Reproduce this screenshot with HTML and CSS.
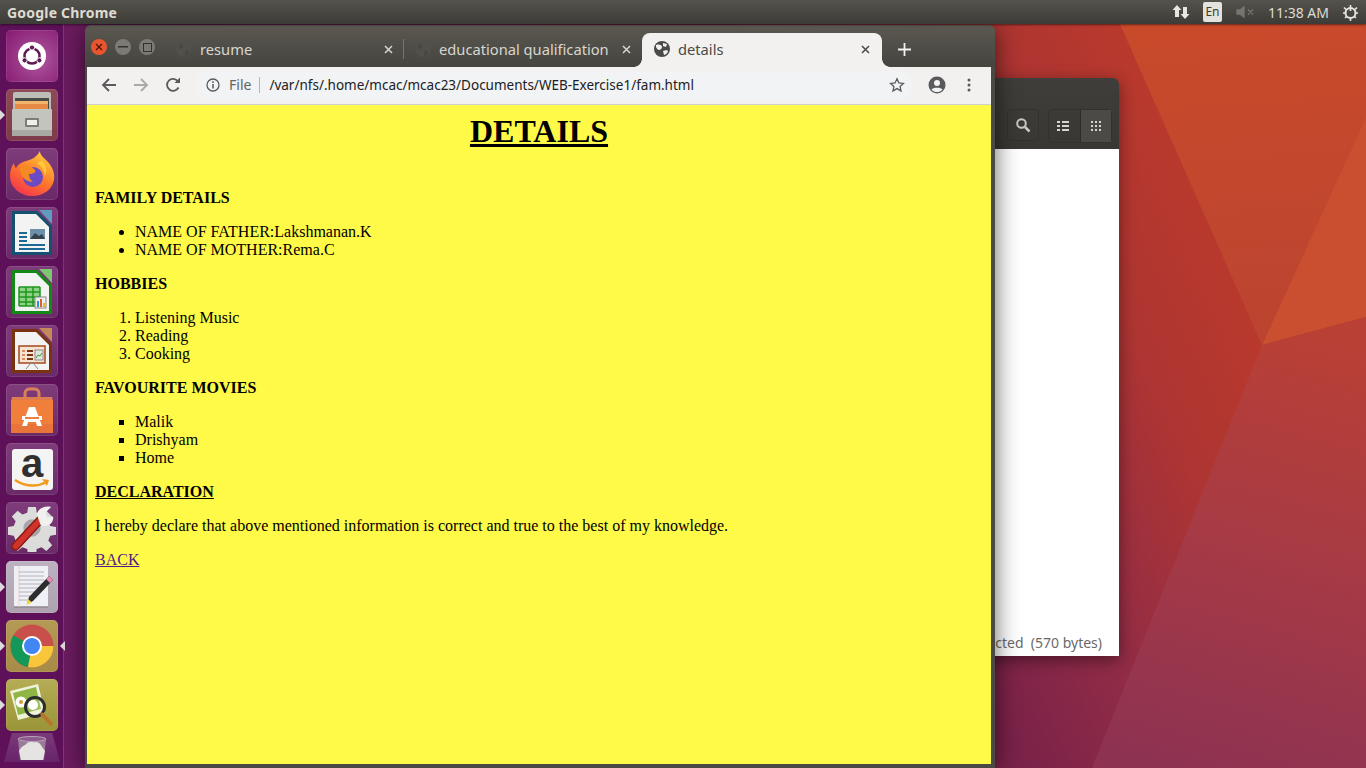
FILE: index.html
```html
<!DOCTYPE html>
<html lang="en">
<head>
    <meta charset="UTF-8">
    <title>details</title>
    <link rel="stylesheet" href="styles.css">
</head>
<body>
    <div class="desktop">
        <svg class="wallpaper" width="1366" height="768" viewBox="0 0 1366 768">
            <defs>
                <linearGradient id="wall" gradientUnits="userSpaceOnUse" x1="1200" y1="100" x2="100" y2="600">
                    <stop offset="0" stop-color="#bd3a2b"/>
                    <stop offset="0.13" stop-color="#ae3532"/>
                    <stop offset="0.25" stop-color="#922c46"/>
                    <stop offset="0.36" stop-color="#7a2249"/>
                    <stop offset="0.85" stop-color="#6c1b60"/>
                </linearGradient>
                <linearGradient id="wedge" gradientUnits="userSpaceOnUse" x1="1240" y1="24" x2="1262" y2="345">
                    <stop offset="0" stop-color="#c94a2b"/>
                    <stop offset="1" stop-color="#bb4430"/>
                </linearGradient>
                <linearGradient id="lower" gradientUnits="userSpaceOnUse" x1="1300" y1="330" x2="1180" y2="768">
                    <stop offset="0" stop-color="#b94035"/>
                    <stop offset="0.5" stop-color="#a63a45"/>
                    <stop offset="1" stop-color="#8e3252"/>
                </linearGradient>
            </defs>
            <rect width="1366" height="768" fill="url(#wall)"/>
            <polygon points="1120,24 1366,24 1366,117 1262,345" fill="url(#wedge)"/>
            <polygon points="1262,345 1366,117 1366,317" fill="#ca4f30"/>
            <polygon points="1262,345 1366,317 1366,768 1092,768" fill="url(#lower)"/>
        </svg>

        <div class="topbar">
            <span class="topbar-title">Google Chrome</span>
            <div class="indicators">
                <svg width="18" height="16" viewBox="0 0 18 16"><path d="M5 1l4.500 5H7v7H3V6H.5zM13 15l-4.500-5H11V3h4v7h2.500z" fill="#e8e6e0"/></svg>
                <span class="lang">En</span>
                <svg width="20" height="12" viewBox="0 0 20 12"><path d="M1 4h3l4-3v10L4 8H1zM12 3.500l5 5M17 3.500l-5 5" fill="#77756f" stroke="#77756f" stroke-width="1.300"/></svg>
                <span class="clock">11:38 AM</span>
                <svg width="17" height="17" viewBox="0 0 17 17"><circle cx="8.500" cy="9" r="5" fill="none" stroke="#e8e6e0" stroke-width="2"/><path d="M8.500 1v6M2 3.500l2 2M15 3.500l-2 2M1 9h2M14 9h2M3 14l1.500-1.500M14 14l-1.500-1.500M8.500 15v2" stroke="#e8e6e0" stroke-width="1.600"/></svg>
            </div>
        </div>

        <div class="launcher">
            <div class="tile tile-ubuntu">
                <svg width="30" height="30" viewBox="0 0 30 30"><circle cx="15" cy="15" r="14" fill="#fff"/><circle cx="15" cy="15" r="7.500" fill="none" stroke="#5e1a52" stroke-width="2.600"/><circle cx="15" cy="6.500" r="2.600" fill="#5e1a52" stroke="#fff"/><circle cx="7.600" cy="19.300" r="2.600" fill="#5e1a52" stroke="#fff"/><circle cx="22.400" cy="19.300" r="2.600" fill="#5e1a52" stroke="#fff"/></svg>
            </div>
            <div class="tile tile-files running">
                <svg width="44" height="46" viewBox="0 0 44 46"><rect x="3" y="0" width="38" height="20" rx="2" fill="#bdbdb8"/><rect x="5" y="6" width="34" height="14" fill="#4a4a46"/><rect x="5" y="9" width="33" height="3" fill="#f2b36b"/><rect x="5" y="12" width="33" height="5" fill="#e88a45"/><rect x="2" y="17" width="40" height="27" rx="1" fill="#c4c4bf"/><rect x="2" y="38" width="40" height="6" fill="#a9a9a4"/><rect x="15" y="26" width="14" height="9" rx="1" fill="#7d7d76"/><rect x="17" y="28" width="10" height="5" fill="#efefec"/></svg>
            </div>
            <div class="tile tile-plain">
                <svg width="46" height="46" viewBox="0 0 46 46"><defs><linearGradient id="ff" x1="0.8" y1="0" x2="0.2" y2="1"><stop offset="0" stop-color="#ffd23f"/><stop offset="0.5" stop-color="#ff7a2a"/><stop offset="1" stop-color="#f3304f"/></linearGradient></defs><path d="M31 0c0 4 3 6 7 10 6 6 8 13 7 19-2 10-11 16-22 16S1 37 1 25c0-5 1-9 4-13 0 2 1 4 2 5 2-4 6-6 10-7 5-1 11-4 14-10z" fill="url(#ff)"/><circle cx="24" cy="26" r="10" fill="#6a4bc4"/><path d="M11 16c4-2 10-2 14 2 4 3-1 5-5 5 0 3 1 6 4 8-7 0-13-5-13-15z" fill="#f58a22"/><path d="M33 10c4 4 6 10 3 15-1-6-3-10-8-13z" fill="#ffc93a"/></svg>
            </div>
            <div class="tile tile-plain">
                <svg width="42" height="48" viewBox="0 0 42 48"><path d="M1 2h25l15 15v29H1z" fill="#14506f"/><path d="M28 1h13v14z" fill="#5f9cc0"/><path d="M4 5h21l13 13v25H4z" fill="#f2f3f2"/><path d="M8 23h8v2H8zM8 27h8v2H8zM8 31h8v2H8zM8 35h26v2H8zM8 39h26v2H8z" fill="#1b6a94"/><rect x="19" y="20" width="15" height="10" fill="#6d8fa8"/><path d="M19 30l5-6 4 3 3-2 3 5z" fill="#33424e"/></svg>
            </div>
            <div class="tile tile-plain">
                <svg width="42" height="48" viewBox="0 0 42 48"><path d="M1 2h25l15 15v29H1z" fill="#138a16"/><path d="M28 1h13v14z" fill="#7dc672"/><path d="M4 5h21l13 13v25H4z" fill="#f2f3f2"/><path d="M8 19h21v19H8z" fill="#8fd184"/><path d="M8 19h21M8 24h21M8 29h21M8 34h21M8 38h21M8 19v19M15 19v19M22 19v19M29 19v19" stroke="#1c961c" stroke-width="1.500" fill="none"/><rect x="24" y="29" width="11" height="11" fill="#eee" stroke="#8a8a8a"/><path d="M26 33h2v6h-2z" fill="#2b8fd6"/><path d="M29 31h2v8h-2z" fill="#d9622a"/><path d="M32 35h2v4h-2z" fill="#f0b429"/></svg>
            </div>
            <div class="tile tile-plain">
                <svg width="42" height="48" viewBox="0 0 42 48"><path d="M1 2h25l15 15v29H1z" fill="#7a3310"/><path d="M28 1h13v14z" fill="#c58a5c"/><path d="M4 5h21l13 13v25H4z" fill="#f2f3f2"/><rect x="8" y="19" width="26" height="17" fill="#f5e3d3" stroke="#a4491c" stroke-width="1.500"/><path d="M11 23h3v2h-3zM11 27h3v2h-3zM11 31h3v2h-3z" fill="#e08a5a"/><path d="M16 23h6v2h-6zM16 27h6v2h-6zM16 31h6v2h-6z" fill="#7a3310"/><rect x="24" y="23" width="8" height="10" fill="#dfe5df" stroke="#8a8a8a"/><path d="M25 31l2-3 2 1 2-3" fill="none" stroke="#3b9b3b"/><path d="M15 42l5-6h2l5 6" fill="none" stroke="#888"/></svg>
            </div>
            <div class="tile tile-plain">
                <svg width="44" height="46" viewBox="0 0 44 46"><path d="M15 14V6c0-2 2-4 4-4h6c2 0 4 2 4 4v8" fill="none" stroke="#d9825a" stroke-width="3"/><path d="M2 10h40l1 5H1z" fill="#dd7d4f"/><path d="M1 13h42v33H1z" fill="#f07f3c"/><rect x="1" y="37" width="42" height="9" fill="#e9743a"/><path d="M19 20h6l7 19h-5l-1-4h-8l-1 4h-5z" fill="#fff"/><rect x="12" y="29" width="20" height="4" fill="#fff"/><rect x="15" y="30" width="14" height="2" fill="#ee7f3f"/></svg>
            </div>
            <div class="tile tile-plain">
                <div class="amazon">
                    <span class="amazon-a">a</span>
                    <svg width="38" height="12" viewBox="0 0 38 12"><path d="M2 2c10 7 22 7 32 2" fill="none" stroke="#f39a1c" stroke-width="2.500"/><path d="M29 1l7 1-2 6z" fill="#f39a1c"/></svg>
                </div>
            </div>
            <div class="tile tile-plain">
                <svg width="48" height="48" viewBox="0 0 50 50"><path d="M21 3h8l1 6 5 2 5-4 6 6-4 5 2 5 6 1v8l-6 1-2 5 4 5-6 6-5-4-5 2-1 6h-8l-1-6-5-2-5 4-6-6 4-5-2-5-6-1v-8l6-1 2-5-4-5 6-6 5 4 5-2z" fill="#dcdcda"/><circle cx="25" cy="25" r="9" fill="#a9a4aa"/><path d="M8 44L34 16" stroke="#8a1a14" stroke-width="9" stroke-linecap="round"/><path d="M8 44L34 16" stroke="#d0332a" stroke-width="6" stroke-linecap="round"/><path d="M30 11c1-6 8-10 15-8l-6 6 2 5 6-1c1 7-6 12-13 9z" fill="#f1f1f0"/></svg>
            </div>
            <div class="tile tile-light running">
                <svg width="42" height="42" viewBox="0 0 42 42"><rect x="3" y="0" width="34" height="41" fill="#eff0f5"/><path d="M3 41h34" stroke="#8e8791" stroke-width="1.500"/><path d="M8 0v41" stroke="#f0ccd0" stroke-width="1"/><path d="M8 6H33M8 10H33M8 14H33M8 18H33M8 22H29M8 26H26M8 30H22M8 34H19" stroke="#8e8f96" stroke-width="1" stroke-opacity="0.6"/><path d="M38 10l4 4-20 21-6 3 2-7z" fill="#2c2c2c"/><path d="M38 10l4 4-3 3-4-4z" fill="#e58ab0"/><path d="M15.500 39l1.500-6 4 3.500z" fill="#f2d44a"/></svg>
            </div>
            <div class="tile tile-chrome running focused">
                <svg width="44" height="44" viewBox="0 0 44 44"><circle cx="22" cy="22" r="21.500" fill="#c9504a"/><path d="M22 22L3.400 11.300A21.500 21.500 0 0 0 18 43.100z" fill="#12995a"/><path d="M22 22l21.500 0A21.500 21.500 0 0 1 18 43.100z" fill="#f8c63a"/><circle cx="22" cy="22" r="10" fill="#fff"/><circle cx="22" cy="22" r="8" fill="#4285f4"/></svg>
            </div>
            <div class="tile tile-viewer running">
                <svg width="46" height="44" viewBox="0 0 46 44"><path d="M1 8l28-7 7 29-27 7z" fill="#eef2d8"/><path d="M4 10l23-6 5 22-23 6z" fill="#8fb544"/><circle cx="12" cy="19" r="5.500" fill="#fff"/><circle cx="12" cy="19" r="2" fill="#d99c2b"/><circle cx="24" cy="22" r="5" fill="#fff"/><circle cx="26" cy="24" r="9.500" fill="#ffffff" fill-opacity="0.15" stroke="#2c2c2c" stroke-width="3"/><path d="M33 31l9 10" stroke="#b8742c" stroke-width="3.500" stroke-linecap="round"/></svg>
            </div>
            <div class="trash">
                <svg width="32" height="26" viewBox="0 0 32 26"><path d="M2 3l2 21h24l2-21z" fill="#9a7a9a"/><ellipse cx="16" cy="3" rx="14" ry="2.500" fill="#8c5a8c" stroke="#b8a3b6"/><path d="M3 15c3-6 6-5 8-8 4-2 6 0 9-1 4 0 6 5 9 9l-2 9H5z" fill="#e6e3e3"/></svg>
            </div>
        </div>

        <div class="files-window">
            <div class="files-header">
                <div class="files-btn"><svg width="16" height="16" viewBox="0 0 16 16"><circle cx="6.500" cy="6.500" r="4.300" fill="none" stroke="#c9c8c4" stroke-width="2"/><path d="M10 10l4.500 4.500" stroke="#c9c8c4" stroke-width="2.500"/></svg></div>
                <div class="files-toggle">
                    <div class="files-seg"><svg width="12" height="10" viewBox="0 0 12 10"><path d="M0 0h3v2H0zM5 0h7v2H5zM0 4h3v2H0zM5 4h7v2H5zM0 8h3v2H0zM5 8h7v2H5z" fill="#d6d5d1"/></svg></div>
                    <div class="files-seg on"><svg width="10" height="10" viewBox="0 0 10 10"><path d="M0 0h2v2H0zM4 0h2v2H4zM8 0h2v2H8zM0 4h2v2H0zM4 4h2v2H4zM8 4h2v2H8zM0 8h2v2H0zM4 8h2v2H4zM8 8h2v2H8z" fill="#d6d5d1"/></svg></div>
                </div>
            </div>
            <div class="files-body">
                <span class="files-status">cted&nbsp; (570 bytes)</span>
            </div>
        </div>

        <div class="chrome">
            <div class="tabstrip">
                <div class="win-btns">
                    <span class="win-btn close"><svg width="8" height="8" viewBox="0 0 8 8"><path d="M1 1l6 6M7 1L1 7" stroke="#4a1208" stroke-width="1.200"/></svg></span>
                    <span class="win-btn"><svg width="10" height="2" viewBox="0 0 10 2"><rect width="10" height="1.500" fill="#33322e"/></svg></span>
                    <span class="win-btn"><svg width="9" height="9" viewBox="0 0 9 9"><rect x="0.500" y="0.500" width="8" height="8" fill="none" stroke="#33322e"/></svg></span>
                </div>
                <div class="tab tab-first">
                    <svg class="globe" width="16" height="16" viewBox="0 0 16 16"><circle cx="8" cy="8" r="8" fill="#51504b"/><path d="M3 3c3 0 4 1 4 3S4 8 3 7zM9 10c3-1 5 0 4 2s-3 3-4 3z" fill="#484742"/></svg>
                    <span class="tab-label">resume</span>
                    <svg class="tab-x" width="9" height="9" viewBox="0 0 9 9"><path d="M1 1l7 7M8 1L1 8" stroke="#d8d6d0" stroke-width="1.500"/></svg>
                </div>
                <div class="tab tab-second">
                    <svg class="globe" width="16" height="16" viewBox="0 0 16 16"><circle cx="8" cy="8" r="8" fill="#51504b"/><path d="M3 3c3 0 4 1 4 3S4 8 3 7zM9 10c3-1 5 0 4 2s-3 3-4 3z" fill="#484742"/></svg>
                    <span class="tab-label">educational qualification</span>
                    <svg class="tab-x" width="9" height="9" viewBox="0 0 9 9"><path d="M1 1l7 7M8 1L1 8" stroke="#d8d6d0" stroke-width="1.500"/></svg>
                </div>
                <div class="tab tab-active">
                    <svg class="globe" width="16" height="16" viewBox="0 0 16 16"><circle cx="8" cy="8" r="8" fill="#4a4a48"/><path d="M2 4c3-1 6 0 6 2S6 9 5 9 3 8 2 6zM9 2l4 1-1 3-3-1zM9 10c2-1 5-1 5 0s-2 4-4 4z" fill="#f2f1ef"/></svg>
                    <span class="tab-label">details</span>
                    <svg class="tab-x" width="9" height="9" viewBox="0 0 9 9"><path d="M1 1l7 7M8 1L1 8" stroke="#4a4a48" stroke-width="1.500"/></svg>
                </div>
                <span class="new-tab"><svg width="13" height="13" viewBox="0 0 13 13"><path d="M6.500 0v13M0 6.500h13" stroke="#f2f1ef" stroke-width="1.800"/></svg></span>
            </div>
            <div class="toolbar">
                <svg class="nav" width="16" height="16" viewBox="0 0 16 16"><path d="M15 8H2M8 2L2 8l6 6" fill="none" stroke="#5a5a5c" stroke-width="1.800"/></svg>
                <svg class="nav" width="16" height="16" viewBox="0 0 16 16"><path d="M1 8h13M8 2l6 6-6 6" fill="none" stroke="#a9a9ab" stroke-width="1.800"/></svg>
                <svg class="nav" width="16" height="16" viewBox="0 0 16 16"><path d="M13.500 10.500A6 6 0 1 1 13 4.500" fill="none" stroke="#5a5a5c" stroke-width="1.800"/><path d="M9.500 6H15V0.500z" fill="#5a5a5c"/></svg>
                <div class="omnibox">
                    <svg width="14" height="14" viewBox="0 0 14 14"><circle cx="7" cy="7" r="6" fill="none" stroke="#5a5a5c" stroke-width="1.300"/><path d="M7 6v4.500M7 3.300v1.600" stroke="#5a5a5c" stroke-width="1.500"/></svg>
                    <span class="scheme">File</span>
                    <span class="url">/var/nfs/.home/mcac/mcac23/Documents/WEB-Exercise1/fam.html</span>
                    <svg class="star" width="16" height="16" viewBox="0 0 16 16"><path d="M8 1.800l1.900 4.100 4.500.5-3.300 3 .9 4.500L8 11.600l-4 2.300.9-4.500-3.300-3 4.500-.5z" fill="none" stroke="#5a5a5c" stroke-width="1.300"/></svg>
                </div>
                <svg class="avatar" width="18" height="18" viewBox="0 0 18 18"><circle cx="9" cy="9" r="8.500" fill="#5a5a5c"/><circle cx="9" cy="7" r="3" fill="#f1f3f4"/><path d="M3.500 13.500c1.500-2.500 9.500-2.500 11 0-1.500 2-3.500 2.500-5.500 2.500s-4-.5-5.500-2.500z" fill="#f1f3f4"/></svg>
                <svg class="dots" width="4" height="14" viewBox="0 0 4 14"><circle cx="2" cy="2" r="1.500" fill="#5a5a5c"/><circle cx="2" cy="7" r="1.500" fill="#5a5a5c"/><circle cx="2" cy="12" r="1.500" fill="#5a5a5c"/></svg>
            </div>
            <div class="page">
                <h1>DETAILS</h1>
                <p class="sect"><b>FAMILY DETAILS</b></p>
                <ul>
                    <li>NAME OF FATHER:Lakshmanan.K</li>
                    <li>NAME OF MOTHER:Rema.C</li>
                </ul>
                <p><b>HOBBIES</b></p>
                <ol>
                    <li>Listening Music</li>
                    <li>Reading</li>
                    <li>Cooking</li>
                </ol>
                <p><b>FAVOURITE MOVIES</b></p>
                <ul class="square">
                    <li>Malik</li>
                    <li>Drishyam</li>
                    <li>Home</li>
                </ul>
                <p><b><u>DECLARATION</u></b></p>
                <p>I hereby declare that above mentioned information is correct and true to the best of my knowledge.</p>
                <p><a href="#">BACK</a></p>
            </div>
        </div>
    </div>
</body>
</html>
```

FILE: styles.css
```css
html, body { margin: 0; padding: 0; }
body { width: 1366px; height: 768px; overflow: hidden; font-family: "Liberation Sans", sans-serif; }
.desktop { position: relative; width: 1366px; height: 768px; overflow: hidden; background: #6e1c62; }
.wallpaper { position: absolute; left: 0; top: 0; }

/* top panel */
.topbar { position: absolute; left: 0; top: 0; width: 1366px; height: 24px; display: flex; align-items: center; justify-content: space-between; background: linear-gradient(#55534c, #3c3b37); box-shadow: 0 1px 2px rgba(0,0,0,0.5); z-index: 5; }
.topbar-title { margin-left: 7px; font: bold 14px "Noto Sans", sans-serif; color: #dfdbd2; letter-spacing: 0.2px; }
.indicators { display: flex; align-items: center; margin-right: 7px; }
.lang { width: 19px; height: 20px; margin: 0 14px 0 13px; background: #e4e2dc; border-radius: 2px; color: #3c3b37; font: 12px/20px "Noto Sans", sans-serif; text-align: center; }
.clock { margin: 0 13px 0 12px; font: 14px "Noto Sans", sans-serif; color: #dfdbd2; }

/* launcher */
.launcher { position: absolute; left: 0; top: 24px; bottom: 0; width: 64px; box-sizing: border-box; padding: 6px 6px 0; display: flex; flex-direction: column; gap: 7px; background: #5e1158; border-right: 1px solid #7b3a75; z-index: 1; }
.tile { position: relative; flex: none; width: 52px; height: 52px; border-radius: 5px; display: flex; align-items: center; justify-content: center; background: linear-gradient(#7f3c7a, #6a2a68); box-shadow: inset 0 0 0 1px rgba(255,255,255,0.1); }
.tile-ubuntu { background: radial-gradient(circle at 60% 55%, #b45ca2 0, #9a3b88 45%, #86166f 100%); }
.tile-files { background: linear-gradient(#8f4a58, #7d3a4a); }
.tile-light { background: linear-gradient(#bdb2c1, #ada2ae); }
.tile-chrome { background: linear-gradient(#b49a55, #a78b47); }
.tile-viewer { background: linear-gradient(#b5ad55, #9a9438); }
.running::before { content: ""; position: absolute; left: -6px; top: 21px; border: 5px solid transparent; border-left: 5px solid #dcdcdc; }
.focused::after { content: ""; position: absolute; right: -7px; top: 21px; border: 5px solid transparent; border-right: 5px solid #dcdcdc; }
.amazon { width: 41px; height: 41px; border-radius: 3px; background: #f4f4f4; display: flex; flex-direction: column; align-items: center; }
.amazon-a { height: 29px; font: bold 40px/29px "Liberation Sans", sans-serif; color: #2f2f2f; }
.trash { flex: none; width: 56px; height: 29px; margin: -5px 0 0 -2px; display: flex; justify-content: center; align-items: flex-end; background: linear-gradient(#7a3a78, #68246a); clip-path: polygon(14% 0, 86% 0, 100% 100%, 0 100%); }

/* file manager behind */
.files-window { position: absolute; left: 900px; top: 78px; width: 219px; height: 578px; border-radius: 6px 6px 0 0; overflow: hidden; box-shadow: 0 4px 16px rgba(0,0,0,0.45); display: flex; flex-direction: column; }
.files-header { flex: none; height: 71px; box-sizing: border-box; padding: 31px 7px 0 0; display: flex; justify-content: flex-end; gap: 9px; background: linear-gradient(#3f3e3a, #383734); }
.files-btn { width: 32px; height: 32px; display: flex; align-items: center; justify-content: center; border: 1px solid #333230; border-radius: 4px; box-sizing: border-box; }
.files-toggle { display: flex; height: 32px; border: 1px solid #333230; border-radius: 4px; }
.files-seg { width: 31px; box-sizing: border-box; padding-right: 3px; display: flex; align-items: center; justify-content: center; }
.files-seg.on { padding-right: 0; background: #4b4a46; border-left: 1px solid #2d2c2a; }
.files-body { flex: 1; background: #fff; display: flex; align-items: flex-end; justify-content: flex-end; padding: 0 17px 4px 0; }
.files-status { font: 14px "Noto Sans", sans-serif; color: #6a6a6a; white-space: nowrap; }

/* chrome window */
.chrome { position: absolute; left: 85px; top: 25px; width: 910px; height: 743px; box-sizing: border-box; padding: 0 4px 4px 2px; background: #4a4944; border-radius: 6px 6px 0 0; box-shadow: 0 3px 24px rgba(0,0,0,0.6); display: flex; flex-direction: column; z-index: 2; }
.tabstrip { flex: none; height: 42px; box-sizing: border-box; display: flex; align-items: flex-end; background: linear-gradient(#5a5850, #45443f); border-radius: 6px 6px 0 0; margin: 0 -4px 0 -2px; padding-left: 5px; }
.win-btns { position: absolute; left: 6px; top: 14px; display: flex; gap: 8px; }
.win-btn { width: 16px; height: 16px; border-radius: 50%; display: flex; align-items: center; justify-content: center; background: #7b7a73; }
.win-btn.close { background: #e9552f; }
.tab { position: relative; height: 34px; box-sizing: border-box; padding-bottom: 2px; display: flex; align-items: center; font: 14.7px "Noto Sans", sans-serif; color: #d8d6d0; }
.tab-first { width: 228px; height: 20px; margin: 0 0 8px 86px; padding: 0 10px 0 0; border-right: 1px solid #77756d; }
.tab-second { width: 238px; padding-left: 11px; padding-right: 11px; }
.globe { flex: none; margin-right: 8px; }
.tab-label { flex: 1; white-space: nowrap; overflow: hidden; }
.tab-x { flex: none; }
.tab-active { width: 240px; padding-left: 12px; padding-right: 12px; background: #f2f1ef; color: #4a4a48; border-radius: 8px 8px 0 0; }
.tab-active::before, .tab-active::after { content: ""; position: absolute; bottom: 0; width: 8px; height: 8px; }
.tab-active::before { left: -8px; background: radial-gradient(circle at 0 0, transparent 7.500px, #f2f1ef 8px); }
.tab-active::after { right: -8px; background: radial-gradient(circle at 100% 0, transparent 7.500px, #f2f1ef 8px); }
.new-tab { align-self: center; margin: 7px 0 0 16px; display: flex; }
.toolbar { flex: none; height: 38px; box-sizing: border-box; display: flex; align-items: center; padding: 0 14px 1px 14px; background: #f2f1ef; border-bottom: 1px solid #cfcfcd; }
.nav { flex: none; margin-right: 16px; }
.omnibox { flex: 1; height: 29px; margin: 0 8px 0 -2px; border-radius: 15px; display: flex; align-items: center; padding: 0 7px 0 11px; background: #f1f3f4; font: 14px "Noto Sans", sans-serif; }
.scheme { margin-left: 9px; padding-right: 8px; margin-right: 9px; border-right: 1px solid #b4b4b4; line-height: 16px; color: #5f6368; }
.url { flex: 1; font-size: 13.500px; color: #202124; white-space: nowrap; }
.avatar { flex: none; margin: 0 21px 0 8px; }
.dots { flex: none; margin-right: 6px; }

/* the page */
.page { flex: 1; box-sizing: border-box; padding: 8px; background: #fffa47; color: #000; font: 16px/18px "Liberation Serif", serif; overflow: hidden; }
.page h1 { margin: 0 0 39px; font-size: 32px; line-height: 37px; text-align: center; text-decoration: underline; }
.page p { margin: 16px 0; }
.page .sect { margin-top: 0; }
.page ul, .page ol { margin: 16px 0; padding-left: 40px; }
.page ul.square { list-style: square; }
.page a { color: #551a8b; }
```
